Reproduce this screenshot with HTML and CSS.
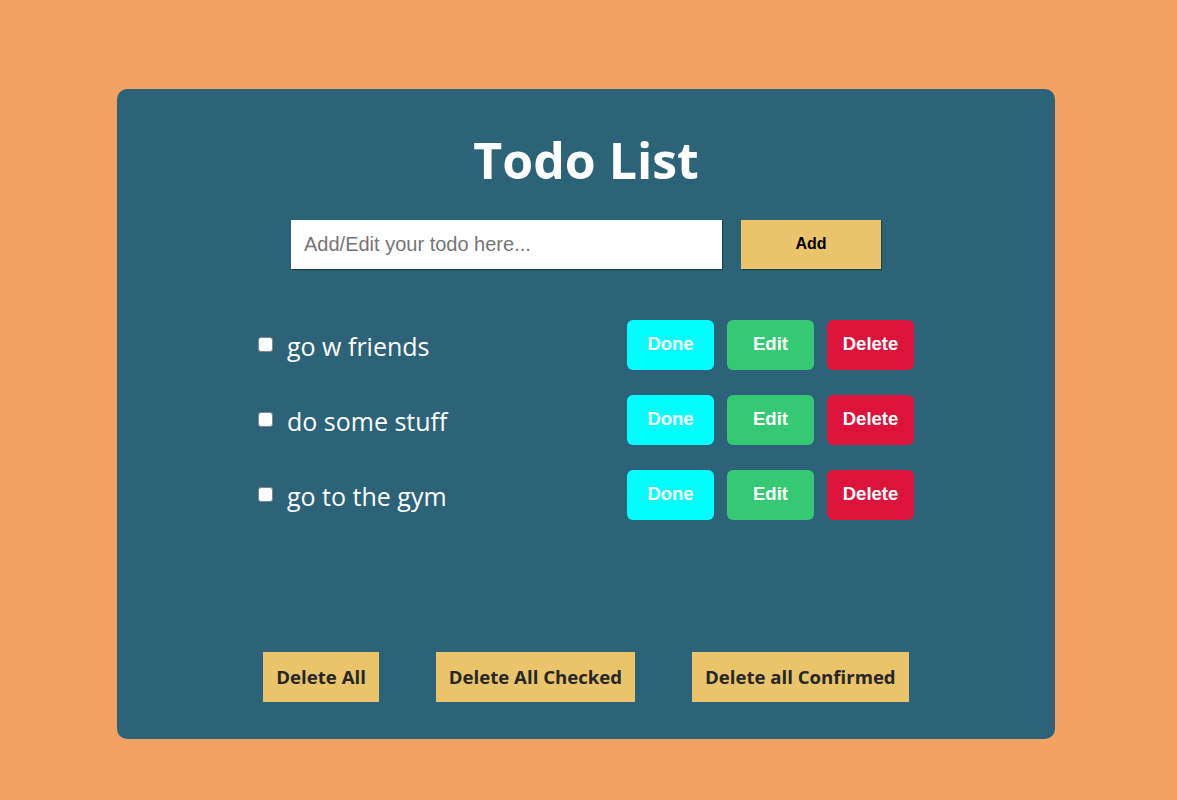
FILE: index.html
```html
<!DOCTYPE html>
<html lang="en">
<head>
<meta charset="utf-8">
<title>Todo List</title>
<link rel="stylesheet" href="styles.css">
</head>
<body>
<main class="card">
  <h1 class="title">Todo List</h1>
  <form class="entry">
    <input class="entry-input" type="text" placeholder="Add/Edit your todo here...">
    <button class="entry-add" type="button">Add</button>
  </form>
  <ul class="todos">
    <li class="todo">
      <label class="todo-label"><input class="todo-check" type="checkbox"><span class="todo-text">go w friends</span></label>
      <div class="todo-actions">
        <button class="act act-done" type="button">Done</button>
        <button class="act act-edit" type="button">Edit</button>
        <button class="act act-delete" type="button">Delete</button>
      </div>
    </li>
    <li class="todo">
      <label class="todo-label"><input class="todo-check" type="checkbox"><span class="todo-text">do some stuff</span></label>
      <div class="todo-actions">
        <button class="act act-done" type="button">Done</button>
        <button class="act act-edit" type="button">Edit</button>
        <button class="act act-delete" type="button">Delete</button>
      </div>
    </li>
    <li class="todo">
      <label class="todo-label"><input class="todo-check" type="checkbox"><span class="todo-text">go to the gym</span></label>
      <div class="todo-actions">
        <button class="act act-done" type="button">Done</button>
        <button class="act act-edit" type="button">Edit</button>
        <button class="act act-delete" type="button">Delete</button>
      </div>
    </li>
  </ul>
  <div class="bulk">
    <button class="bulk-btn" type="button">Delete All</button>
    <button class="bulk-btn" type="button">Delete All Checked</button>
    <button class="bulk-btn" type="button">Delete all Confirmed</button>
  </div>
</main>
</body>
</html>
```
FILE: styles.css
```css
* { box-sizing: border-box; }

body {
  margin: 0;
  background: #f4a261;
  font-family: "Open Sans", "Liberation Sans", sans-serif;
  min-height: 800px;
}

.card {
  width: 938px;
  height: 650px;
  margin: 89px 0 0 117px;
  background: #2c6378;
  border-radius: 10px;
  padding: 36px 0 37px;
  display: flex;
  flex-direction: column;
  align-items: center;
}

.title {
  margin: 0;
  font-size: 50px;
  line-height: 71px;
  font-weight: 700;
  color: #ffffff;
}

.entry {
  margin: 24px 0 0;
  display: flex;
  gap: 19px;
}

.entry-input {
  width: 431px;
  height: 49px;
  border: none;
  outline: none;
  padding: 0 13px;
  font-family: "Liberation Sans", Arial, sans-serif;
  font-size: 20px;
  color: #333;
  background: #fff;
  box-shadow: 1px 1px 1px rgba(0, 0, 0, 0.35);
}

.entry-input::placeholder { color: #757575; }

.entry-add {
  width: 140px;
  height: 49px;
  border: none;
  padding: 0 0 2px;
  background: #e9c46a;
  font-family: "Liberation Sans", Arial, sans-serif;
  font-weight: 700;
  font-size: 16px;
  color: #000;
  box-shadow: 1px 1px 1px rgba(0, 0, 0, 0.35);
}

.todos {
  list-style: none;
  margin: 51px 0 0;
  padding: 0;
  width: 656px;
  display: flex;
  flex-direction: column;
  gap: 25px;
}

.todo {
  display: flex;
  align-items: center;
  justify-content: space-between;
  height: 50px;
}

.todo-label {
  display: flex;
  align-items: center;
  gap: 14px;
}

.todo-check {
  appearance: none;
  -webkit-appearance: none;
  width: 15px;
  height: 15px;
  margin: 0 0 1px;
  background: #fff;
  border: 1px solid #858585;
  border-radius: 3px;
}

.todo-text {
  font-size: 25px;
  color: #fff;
  line-height: 34px;
  padding-top: 2px;
}

.todo-actions {
  display: flex;
  gap: 13px;
}

.act {
  width: 87px;
  height: 50px;
  border: none;
  border-radius: 6px;
  font-family: "Liberation Sans", Arial, sans-serif;
  font-weight: 700;
  font-size: 18.5px;
  color: #fff;
  padding: 0 0 2px;
}

.act-done { background: #00ffff; }
.act-edit { background: #35c973; }
.act-delete { background: #dc143c; }

.bulk {
  margin-top: auto;
  display: flex;
  gap: 57px;
}

.bulk-btn {
  height: 50px;
  padding: 0 13px 2px;
  border: none;
  background: #e9c46a;
  font-family: "Open Sans", sans-serif;
  font-weight: 700;
  font-size: 18.6px;
  color: #262626;
}
```
